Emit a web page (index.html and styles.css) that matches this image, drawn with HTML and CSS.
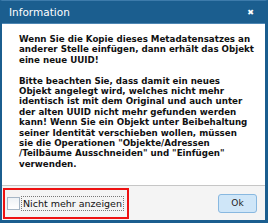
FILE: index.html
```html
<!DOCTYPE html>
<html>
<head>
<meta charset="utf-8">
<link rel="stylesheet" href="styles.css">
</head>
<body>
<div class="dialog">
  <div class="titlebar">
    <span class="title">Information</span>
    <span class="close">&#x2716;</span>
  </div>
  <div class="content">
    <p>Wenn Sie die Kopie dieses Metadatensatzes an<br>anderer Stelle einfügen, dann erhält das Objekt<br>eine neue UUID!</p>
    <p>Bitte beachten Sie, dass damit ein neues<br>Objekt angelegt wird, welches nicht mehr<br>identisch ist mit dem Original und auch unter<br>der alten UUID nicht mehr gefunden werden<br>kann! Wenn Sie ein Objekt unter Beibehaltung<br>seiner Identität verschieben wollen, müssen<br>sie die Operationen "Objekte/Adressen<br>/Teilbäume Ausschneiden" und "Einfügen"<br>verwenden.</p>
  </div>
  <div class="footer">
    <div class="highlight">
      <span class="checkbox"></span>
      <span class="label">Nicht mehr anzeigen</span>
    </div>
    <button class="ok">Ok</button>
  </div>
</div>
</body>
</html>
```
FILE: styles.css
```css
html, body {
  margin: 0;
  padding: 0;
  background: #ffffff;
}
.dialog {
  width: 268px;
  height: 223px;
  box-sizing: border-box;
  border: 2px solid #1b5e8f;
  border-right-width: 3px;
  border-top: 1px solid #3d7bab;
  border-bottom-width: 3px;
  display: flex;
  flex-direction: column;
  font-family: "DejaVu Sans", Verdana, sans-serif;
  background: #ffffff;
}
.titlebar {
  height: 22px;
  background: #1b5e8f;
  display: flex;
  align-items: center;
  justify-content: space-between;
  padding: 0 11px 0 7px;
  border-bottom: 1px solid #4d86b3;
}
.title {
  color: #ffffff;
  font-size: 10.5px;
}
.close {
  color: #ffffff;
  font-size: 8px;
  font-weight: bold;
}
.content {
  flex: 1;
  padding: 10px 4px 0 17px;
  font-size: 8.7px;
  font-weight: bold;
  line-height: 10.4px;
  color: #111111;
  white-space: nowrap;
}
.content p {
  margin: 0 0 10.4px 0;
}
.footer {
  height: 34px;
  border-top: 1px solid #c6c6c6;
  background: #f4f4f4;
  display: flex;
  align-items: center;
  justify-content: space-between;
  padding: 0 8px 0 1px;
}
.highlight {
  border: 2px solid #ee1111;
  display: flex;
  align-items: center;
  padding-left: 2px;
  box-sizing: border-box;
  width: 126px;
  height: 31px;
}
.checkbox {
  width: 13px;
  height: 13px;
  border: 1px solid #a5b5c5;
  background: linear-gradient(#eef2f6, #ffffff);
  box-sizing: border-box;
  margin-right: 1px;
}
.label {
  font-size: 9.5px;
  color: #111111;
  border: 1px dotted #777777;
  padding: 1px 1px;
}
.ok {
  width: 39px;
  height: 19px;
  background: #cfe6f8;
  border: 1px solid #88b8e0;
  border-radius: 3px;
  font-family: "DejaVu Sans", Verdana, sans-serif;
  font-size: 9px;
  color: #222222;
  padding: 0;
}
```
